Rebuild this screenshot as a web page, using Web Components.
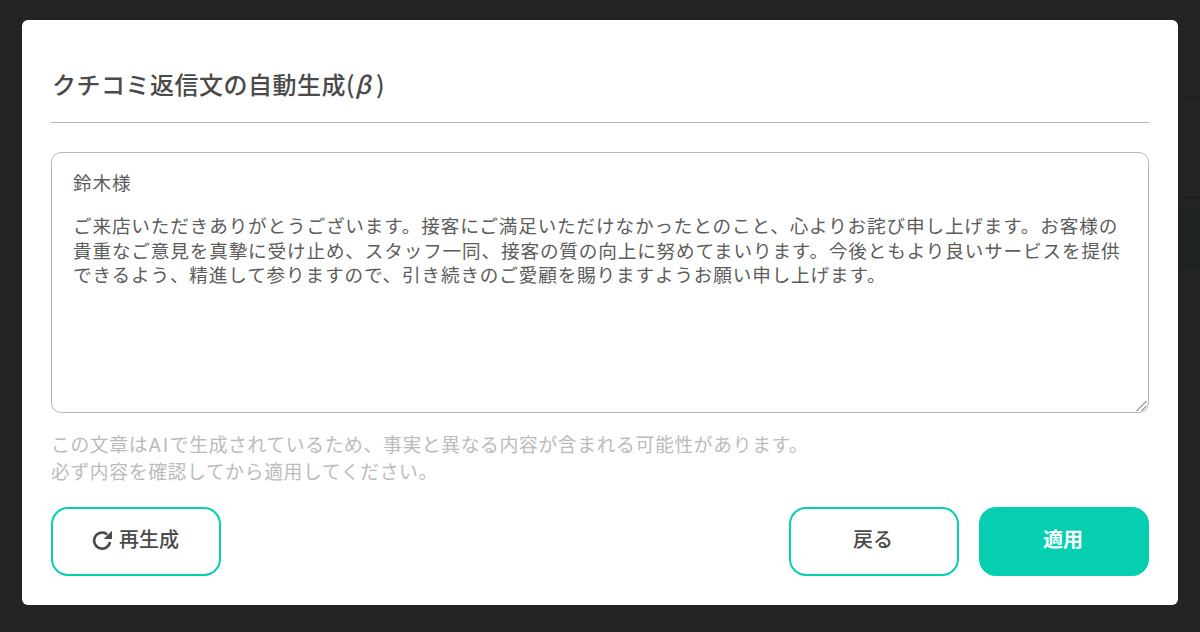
<!DOCTYPE html>
<html lang="ja"><head><meta charset="utf-8">
<style>
html,body{margin:0;height:100%;background:#232323;overflow:hidden}
body{font-family:"Noto Sans CJK JP","Noto Sans",sans-serif}
</style></head><body>
<template id="bd-t"><style>
:host{display:block;position:fixed;inset:0;background:
linear-gradient(#1c1c1c,#1c1c1c) 1178px 96px/22px 1px no-repeat,
linear-gradient(#1b1b1b,#1b1b1b) 1178px 197px/22px 1px no-repeat,
linear-gradient(#1e2220,#1e2220) 1178px 208px/22px 62px no-repeat,#232323}
</style></template>
<template id="btn-t"><style>
:host{display:inline-flex;box-sizing:border-box;width:170px;height:69px;border-radius:17px;border:2px solid #05cfb0;color:#4a4a4a;background:#fff;align-items:center;justify-content:center;gap:6px;font-size:20px;font-weight:500;line-height:1;padding:0 2px 6px 0}
:host([primary]){background:#05cfb0;color:#fff;font-weight:700}
::slotted(svg){display:block;margin-top:3px}
</style><slot></slot></template>
<template id="dlg-t"><style>
:host{display:block;position:relative;margin:20px 22px 0;height:585px;box-sizing:border-box;background:#fff;border-radius:6px;padding:0 29px 29px;color:#444}
.wrap{display:flex;flex-direction:column;height:100%}
.head{height:103px;box-sizing:border-box;border-bottom:1px solid #b8b8b8;display:flex;align-items:flex-end;padding-bottom:22px}
h2{margin:0 0 0 1px;font-size:24px;font-weight:500;letter-spacing:.5px;line-height:32px;color:#4a4a4a}
i{margin-right:-1px}
.body{margin-top:29px;height:261px;box-sizing:border-box;border:1.5px solid #b8b8b8;border-radius:10px;padding:17px 23px 16px 21px;position:relative;font-size:18.6px;letter-spacing:.86px;line-height:24.4px;color:#5c5c5c}
.greet{margin-bottom:19px}
.grip{position:absolute;right:0;bottom:0}
.note{margin-top:18px;font-size:18.8px;letter-spacing:.65px;line-height:26.6px;color:#bbb}
.note span{font-family:Inter;line-height:1;letter-spacing:1.8px}
.actions{margin-top:auto;display:flex;gap:20px}
</style><div class="wrap">
<div class="head"><h2>クチコミ返信文の自動生成(<i>β</i> )</h2></div>
<div class="body"><div class="greet">鈴木様</div><div>ご来店いただきありがとうございます。接客にご満足いただけなかったとのこと、心よりお詫び申し上げます。お客様の貴重なご意見を真摯に受け止め、スタッフ一同、接客の質の向上に努めてまいります。今後ともより良いサービスを提供できるよう、精進して参りますので、引き続きのご愛顧を賜りますようお願い申し上げます。</div><svg class="grip" width="13" height="13" viewBox="0 0 13 13"><path d="M1.5 12 11.5 2M6.5 12 11.5 7" stroke="#555" stroke-width="1" fill="none"/></svg></div>
<div class="note">この文章は<span>AI</span>で生成されているため、事実と異なる内容が含まれる可能性があります。<br>必ず内容を確認してから適用してください。</div>
<div class="actions"><slot></slot></div>
</div></template>
<x-backdrop></x-backdrop>
<x-dialog>
<x-btn><svg width="23" height="23" viewBox="0 0 23 23" fill="none" style="margin-right:-1px"><path d="M19 13A8 8 0 1 1 16.2 5.4" stroke="#4a4a4a" stroke-width="2.6"/><path d="M21 1.8V10H12.8Z" fill="#4a4a4a"/></svg>再生成</x-btn>
<span style="flex:1"></span>
<x-btn>戻る</x-btn>
<x-btn primary>適用</x-btn>
</x-dialog>
<script>
function def(n,t){customElements.define(n,class extends HTMLElement{constructor(){super();this.attachShadow({mode:'open'}).append(document.getElementById(t).content.cloneNode(true))}})}
def('x-backdrop','bd-t');def('x-btn','btn-t');def('x-dialog','dlg-t');
</script></body></html>
